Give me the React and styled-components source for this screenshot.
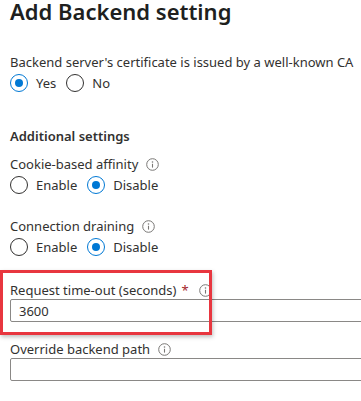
import React from "react";
import styled, { createGlobalStyle } from "styled-components";

const GlobalStyle = createGlobalStyle`
  html, body {
    margin: 0;
    padding: 0;
    background: #ffffff;
    overflow: hidden;
  }
  body {
    font-family: "Noto Sans", "Open Sans", sans-serif;
    color: #323130;
  }
`;

function InfoIcon() {
  return (
    <InfoWrap>
      <svg width="13" height="13" viewBox="0 0 13 13">
        <circle cx="6.5" cy="6.5" r="5.8" fill="none" stroke="#797775" strokeWidth="1" />
        <circle cx="6.5" cy="4" r="0.8" fill="#797775" />
        <line x1="6.5" y1="5.8" x2="6.5" y2="9.6" stroke="#797775" strokeWidth="1.1" />
      </svg>
    </InfoWrap>
  );
}

function Radio({ label, checked }) {
  return (
    <RadioItem>
      <Circle checked={checked} />
      <RadioLabel>{label}</RadioLabel>
    </RadioItem>
  );
}

function App() {
  return (
    <>
      <GlobalStyle />
      <Page>
        <Title>Add Backend setting</Title>

        <Field style={{ marginTop: 30 }}>
          <Label>Backend server's certificate is issued by a well-known CA</Label>
          <RadioGroup>
            <Radio label="Yes" checked />
            <Radio label="No" />
          </RadioGroup>
        </Field>

        <Section>Additional settings</Section>

        <Field>
          <Label>
            Cookie-based affinity
            <InfoIcon />
          </Label>
          <RadioGroup>
            <Radio label="Enable" />
            <Radio label="Disable" checked />
          </RadioGroup>
        </Field>

        <Field style={{ marginTop: 20 }}>
          <Label>
            Connection draining
            <InfoIcon />
          </Label>
          <RadioGroup>
            <Radio label="Enable" />
            <Radio label="Disable" checked />
          </RadioGroup>
        </Field>

        <Highlighted>
          <TightLabel>
            Request time-out (seconds)
            <Required>*</Required>
            <InfoIcon />
          </TightLabel>
          <TextBox value="3600" readOnly />
          <Highlight />
        </Highlighted>

        <Field style={{ marginTop: 17 }}>
          <TightLabel>
            Override backend path
            <InfoIcon />
          </TightLabel>
          <TextBox value="" readOnly />
        </Field>
      </Page>
    </>
  );
}

export default App;

const Page = styled.div`
  width: 361px;
  height: 401px;
  padding: 0 10px;
  box-sizing: border-box;
  overflow: hidden;
`;

const Title = styled.h1`
  margin: 0;
  font-size: 22px;
  line-height: 22px;
  font-weight: 600;
  color: #201f1e;
  white-space: nowrap;
`;

const Field = styled.div`
  display: flex;
  flex-direction: column;
`;

const Label = styled.div`
  display: flex;
  align-items: center;
  font-size: 13px;
  line-height: 20px;
  color: #323130;
  white-space: nowrap;
`;

const TightLabel = styled(Label)`
  margin-bottom: -2px;
`;

const Section = styled.div`
  margin-top: 32px;
  font-size: 13px;
  line-height: 20px;
  font-weight: 600;
  color: #323130;
  margin-bottom: 8px;
`;

const InfoWrap = styled.span`
  display: inline-flex;
  margin-left: 8px;
`;

const Required = styled.span`
  color: #a4262c;
  margin-left: 5px;
  margin-right: 2px;
`;

const RadioGroup = styled.div`
  display: flex;
  align-items: center;
  gap: 10px;
  height: 22px;
`;

const RadioItem = styled.label`
  display: flex;
  align-items: center;
`;

const Circle = styled.span`
  position: relative;
  width: 18px;
  height: 18px;
  border-radius: 50%;
  box-sizing: border-box;
  border: 1px solid ${(p) => (p.checked ? "#0078d4" : "#323130")};
  &::after {
    content: "";
    display: ${(p) => (p.checked ? "block" : "none")};
    position: absolute;
    left: 4px;
    top: 4px;
    width: 8px;
    height: 8px;
    border-radius: 50%;
    background: #0078d4;
  }
`;

const RadioLabel = styled.span`
  margin-left: 8px;
  font-size: 13px;
  color: #323130;
`;

const Highlighted = styled.div`
  position: relative;
  display: flex;
  flex-direction: column;
  margin-top: 22px;
`;

const Highlight = styled.div`
  position: absolute;
  left: -10px;
  top: -10px;
  width: 212px;
  height: 65px;
  box-sizing: border-box;
  border: 3px solid #e8363f;
  box-shadow: 1px 2px 4px rgba(0, 0, 0, 0.25);
  pointer-events: none;
`;

const TextBox = styled.input`
  width: 420px;
  height: 23px;
  box-sizing: border-box;
  margin: 1px 0 0;
  padding: 0 8px;
  border: 1px solid #8a8886;
  border-radius: 2px;
  font-family: "Noto Sans", "Open Sans", sans-serif;
  font-size: 13px;
  color: #323130;
  outline: none;
`;
